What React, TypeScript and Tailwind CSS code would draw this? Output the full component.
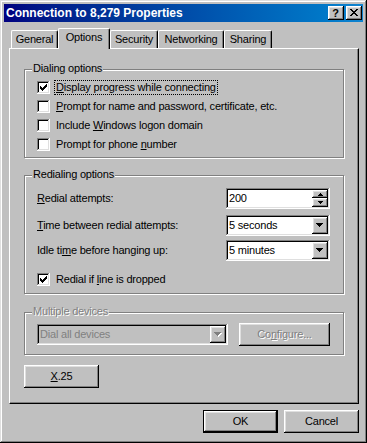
import React from "react";

const raised =
  "shadow-[inset_-1px_-1px_#000,inset_1px_1px_#fff,inset_-2px_-2px_#808080,inset_2px_2px_#dfdfdf]";
const sunken =
  "shadow-[inset_-1px_-1px_#fff,inset_1px_1px_#808080,inset_-2px_-2px_#dfdfdf,inset_2px_2px_#000]";

function DownArrow({ gray }: { gray?: boolean }) {
  return (
    <svg width="8" height="5" shapeRendering="crispEdges" className="block">
      {gray && (
        <g fill="#fff">
          <rect x="1" y="1" width="7" height="1" />
          <rect x="2" y="2" width="5" height="1" />
          <rect x="3" y="3" width="3" height="1" />
          <rect x="4" y="4" width="1" height="1" />
        </g>
      )}
      <g fill={gray ? "#808080" : "#000"}>
        <rect x="0" y="0" width="7" height="1" />
        <rect x="1" y="1" width="5" height="1" />
        <rect x="2" y="2" width="3" height="1" />
        <rect x="3" y="3" width="1" height="1" />
      </g>
    </svg>
  );
}

function SmallArrow({ up }: { up?: boolean }) {
  return (
    <svg width="5" height="3" shapeRendering="crispEdges" className="block">
      {up ? (
        <g fill="#000">
          <rect x="2" y="0" width="1" height="1" />
          <rect x="1" y="1" width="3" height="1" />
          <rect x="0" y="2" width="5" height="1" />
        </g>
      ) : (
        <g fill="#000">
          <rect x="0" y="0" width="5" height="1" />
          <rect x="1" y="1" width="3" height="1" />
          <rect x="2" y="2" width="1" height="1" />
        </g>
      )}
    </svg>
  );
}

function Check({ checked }: { checked?: boolean }) {
  const cols: [number, number][] = [
    [1, 3],
    [2, 4],
    [3, 5],
    [4, 4],
    [5, 3],
    [6, 2],
    [7, 1],
  ];
  return (
    <div className={`w-[13px] h-[13px] bg-white p-[2px] shrink-0 ${sunken}`}>
      {checked && (
        <svg width="9" height="9" shapeRendering="crispEdges" className="block">
          {cols.map(([x, y]) => (
            <rect key={x} x={x} y={y} width="1" height="3" fill="#000" />
          ))}
        </svg>
      )}
    </div>
  );
}

function Group({
  label,
  disabled,
  className,
  children,
}: {
  label: string;
  disabled?: boolean;
  className: string;
  children?: React.ReactNode;
}) {
  return (
    <div
      className={`relative w-[320px] border border-[#808080] shadow-[inset_1px_1px_#fff,1px_1px_#fff] ${className}`}
    >
      <span
        className={`absolute -top-[8px] left-[7px] px-[1px] bg-[#c0c0c0] leading-[13px] ${
          disabled ? "text-[#808080] [text-shadow:1px_1px_0_#fff]" : ""
        }`}
      >
        {label}
      </span>
      {children}
    </div>
  );
}

function CheckRow({
  checked,
  focus,
  children,
}: {
  checked?: boolean;
  focus?: boolean;
  children: React.ReactNode;
}) {
  return (
    <div className="flex items-center h-[19px] pl-[12px] gap-[4px]">
      <Check checked={checked} />
      <span
        className={`px-[1px] leading-[13px] border ${
          focus ? "border-dotted border-black" : "border-transparent"
        }`}
      >
        {children}
      </span>
    </div>
  );
}

function Combo({ value, disabled, w }: { value: string; disabled?: boolean; w: string }) {
  return (
    <div
      className={`${w} h-[21px] p-[2px] flex ${sunken} ${
        disabled ? "bg-[#c0c0c0] text-[#808080]" : "bg-white"
      }`}
    >
      <span className="flex-1 pl-[1px] leading-[17px]">{value}</span>
      <div
        className={`w-[16px] h-[17px] bg-[#c0c0c0] flex items-center justify-center ${raised}`}
      >
        <DownArrow gray={disabled} />
      </div>
    </div>
  );
}

function Tab({
  label,
  w,
  selected,
}: {
  label: string;
  w: string;
  selected?: boolean;
}) {
  return (
    <div
      className={`${w} ${
        selected ? "h-[21px] -mb-[1px] pb-[3px]" : "h-[18px]"
      } bg-[#c0c0c0] border-l border-t border-white border-r border-r-black shadow-[inset_-1px_0_#808080] rounded-t-[2px] flex items-center justify-center leading-[13px]`}
    >
      {label}
    </div>
  );
}

function Button({
  children,
  w,
  isDefault,
  disabled,
}: {
  children: React.ReactNode;
  w: string;
  isDefault?: boolean;
  disabled?: boolean;
}) {
  const text = disabled ? "text-[#808080] [text-shadow:1px_1px_0_#fff]" : "";
  if (isDefault) {
    return (
      <div className={`${w} h-[23px] border border-black`}>
        <div
          className={`w-full h-full bg-[#c0c0c0] flex items-center justify-center ${raised} ${text}`}
        >
          {children}
        </div>
      </div>
    );
  }
  return (
    <div
      className={`${w} h-[23px] bg-[#c0c0c0] flex items-center justify-center ${raised} ${text}`}
    >
      {children}
    </div>
  );
}

export default function App() {
  return (
    <div
      className={`w-[367px] h-[443px] bg-[#c0c0c0] p-[4px] flex flex-col text-[11px] text-black font-['Liberation_Sans',Arial,sans-serif] shadow-[inset_-1px_-1px_#000,inset_1px_1px_#dfdfdf,inset_-2px_-2px_#808080,inset_2px_2px_#fff]`}
    >
      {/* Title bar */}
      <div className="h-[18px] bg-gradient-to-r from-[#000080] to-[#1084d0] flex items-center pl-[2px] pr-[1px]">
        <span className="flex-1 text-white font-bold text-[12px] leading-[14px]">
          Connection to 8,279 Properties
        </span>
        <div className="flex gap-[2px]">
          <div
            className={`w-[16px] h-[14px] bg-[#c0c0c0] flex items-center justify-center ${raised}`}
          >
            <span className="font-bold text-[11px] leading-[11px] pr-[1px]">?</span>
          </div>
          <div
            className={`w-[16px] h-[14px] bg-[#c0c0c0] flex items-center justify-center ${raised}`}
          >
            <svg width="8" height="7" shapeRendering="crispEdges" className="block -mt-[1px]">
              <g fill="#000">
                <rect x="0" y="0" width="2" height="1" />
                <rect x="6" y="0" width="2" height="1" />
                <rect x="1" y="1" width="2" height="1" />
                <rect x="5" y="1" width="2" height="1" />
                <rect x="2" y="2" width="4" height="1" />
                <rect x="3" y="3" width="2" height="1" />
                <rect x="2" y="4" width="4" height="1" />
                <rect x="1" y="5" width="2" height="1" />
                <rect x="5" y="5" width="2" height="1" />
                <rect x="0" y="6" width="2" height="1" />
                <rect x="6" y="6" width="2" height="1" />
              </g>
            </svg>
          </div>
        </div>
      </div>

      {/* Body */}
      <div className="pl-[5px] pr-[4px] pt-[6px] flex flex-col tracking-[-0.2px]">
        {/* Tabs */}
        <div className="relative z-10 h-[20px] flex items-end pl-[2px]">
          <Tab label="General" w="w-[47px]" />
          <Tab label="Options" w="w-[52px]" selected />
          <Tab label="Security" w="w-[48px]" />
          <Tab label="Networking" w="w-[66px]" />
          <Tab label="Sharing" w="w-[48px]" />
        </div>

        {/* Panel */}
        <div className="h-[356px] border border-t-white border-l-white border-r-black border-b-black shadow-[inset_-1px_-1px_#808080] pl-[14px] pt-[20px] flex flex-col">
          <Group label="Dialing options" className="pt-[8px] pb-[3px]">
            <CheckRow checked focus>
              <u>D</u>isplay progress while connecting
            </CheckRow>
            <CheckRow>
              <u>P</u>rompt for name and password, certificate, etc.
            </CheckRow>
            <CheckRow>
              Include <u>W</u>indows logon domain
            </CheckRow>
            <CheckRow>
              Prompt for phone <u>n</u>umber
            </CheckRow>
          </Group>

          <Group label="Redialing options" className="mt-[17px] pt-[12px] pb-[4px]">
            <div className="flex items-center justify-between h-[21px] pl-[12px] pr-[13px]">
              <span>
                <u>R</u>edial attempts:
              </span>
              <div className={`w-[104px] h-[21px] bg-white p-[2px] flex ${sunken}`}>
                <span className="flex-1 pl-[1px] leading-[17px]">200</span>
                <div className="w-[16px] flex flex-col">
                  <div
                    className={`h-[8px] bg-[#c0c0c0] flex items-center justify-center ${raised}`}
                  >
                    <SmallArrow up />
                  </div>
                  <div
                    className={`h-[9px] bg-[#c0c0c0] flex items-center justify-center ${raised}`}
                  >
                    <SmallArrow />
                  </div>
                </div>
              </div>
            </div>
            <div className="mt-[6px] flex items-center justify-between h-[21px] pl-[12px] pr-[13px]">
              <span>
                <u>T</u>ime between redial attempts:
              </span>
              <Combo value="5 seconds" w="w-[104px]" />
            </div>
            <div className="mt-[4px] flex items-center justify-between h-[21px] pl-[12px] pr-[13px]">
              <span>
                Idle ti<u>m</u>e before hanging up:
              </span>
              <Combo value="5 minutes" w="w-[104px]" />
            </div>
            <div className="mt-[9px]">
              <CheckRow checked>
                Redial if <u>l</u>ine is dropped
              </CheckRow>
            </div>
          </Group>

          <Group
            label="Multiple devices"
            disabled
            className="mt-[18px] pt-[10px] pb-[8px]"
          >
            <div className="flex items-center justify-between h-[23px] pl-[12px] pr-[13px]">
              <Combo value="Dial all devices" w="w-[191px]" disabled />
              <Button w="w-[91px]" disabled>
                <span>
                  Co<u>n</u>figure...
                </span>
              </Button>
            </div>
          </Group>

          <div className="mt-[10px]">
            <Button w="w-[75px]">
              <span>
                <u>X</u>.25
              </span>
            </Button>
          </div>
        </div>

        {/* Bottom buttons */}
        <div className="mt-[6px] flex justify-end gap-[6px]">
          <Button w="w-[75px]" isDefault>
            OK
          </Button>
          <Button w="w-[75px]">Cancel</Button>
        </div>
      </div>
    </div>
  );
}
